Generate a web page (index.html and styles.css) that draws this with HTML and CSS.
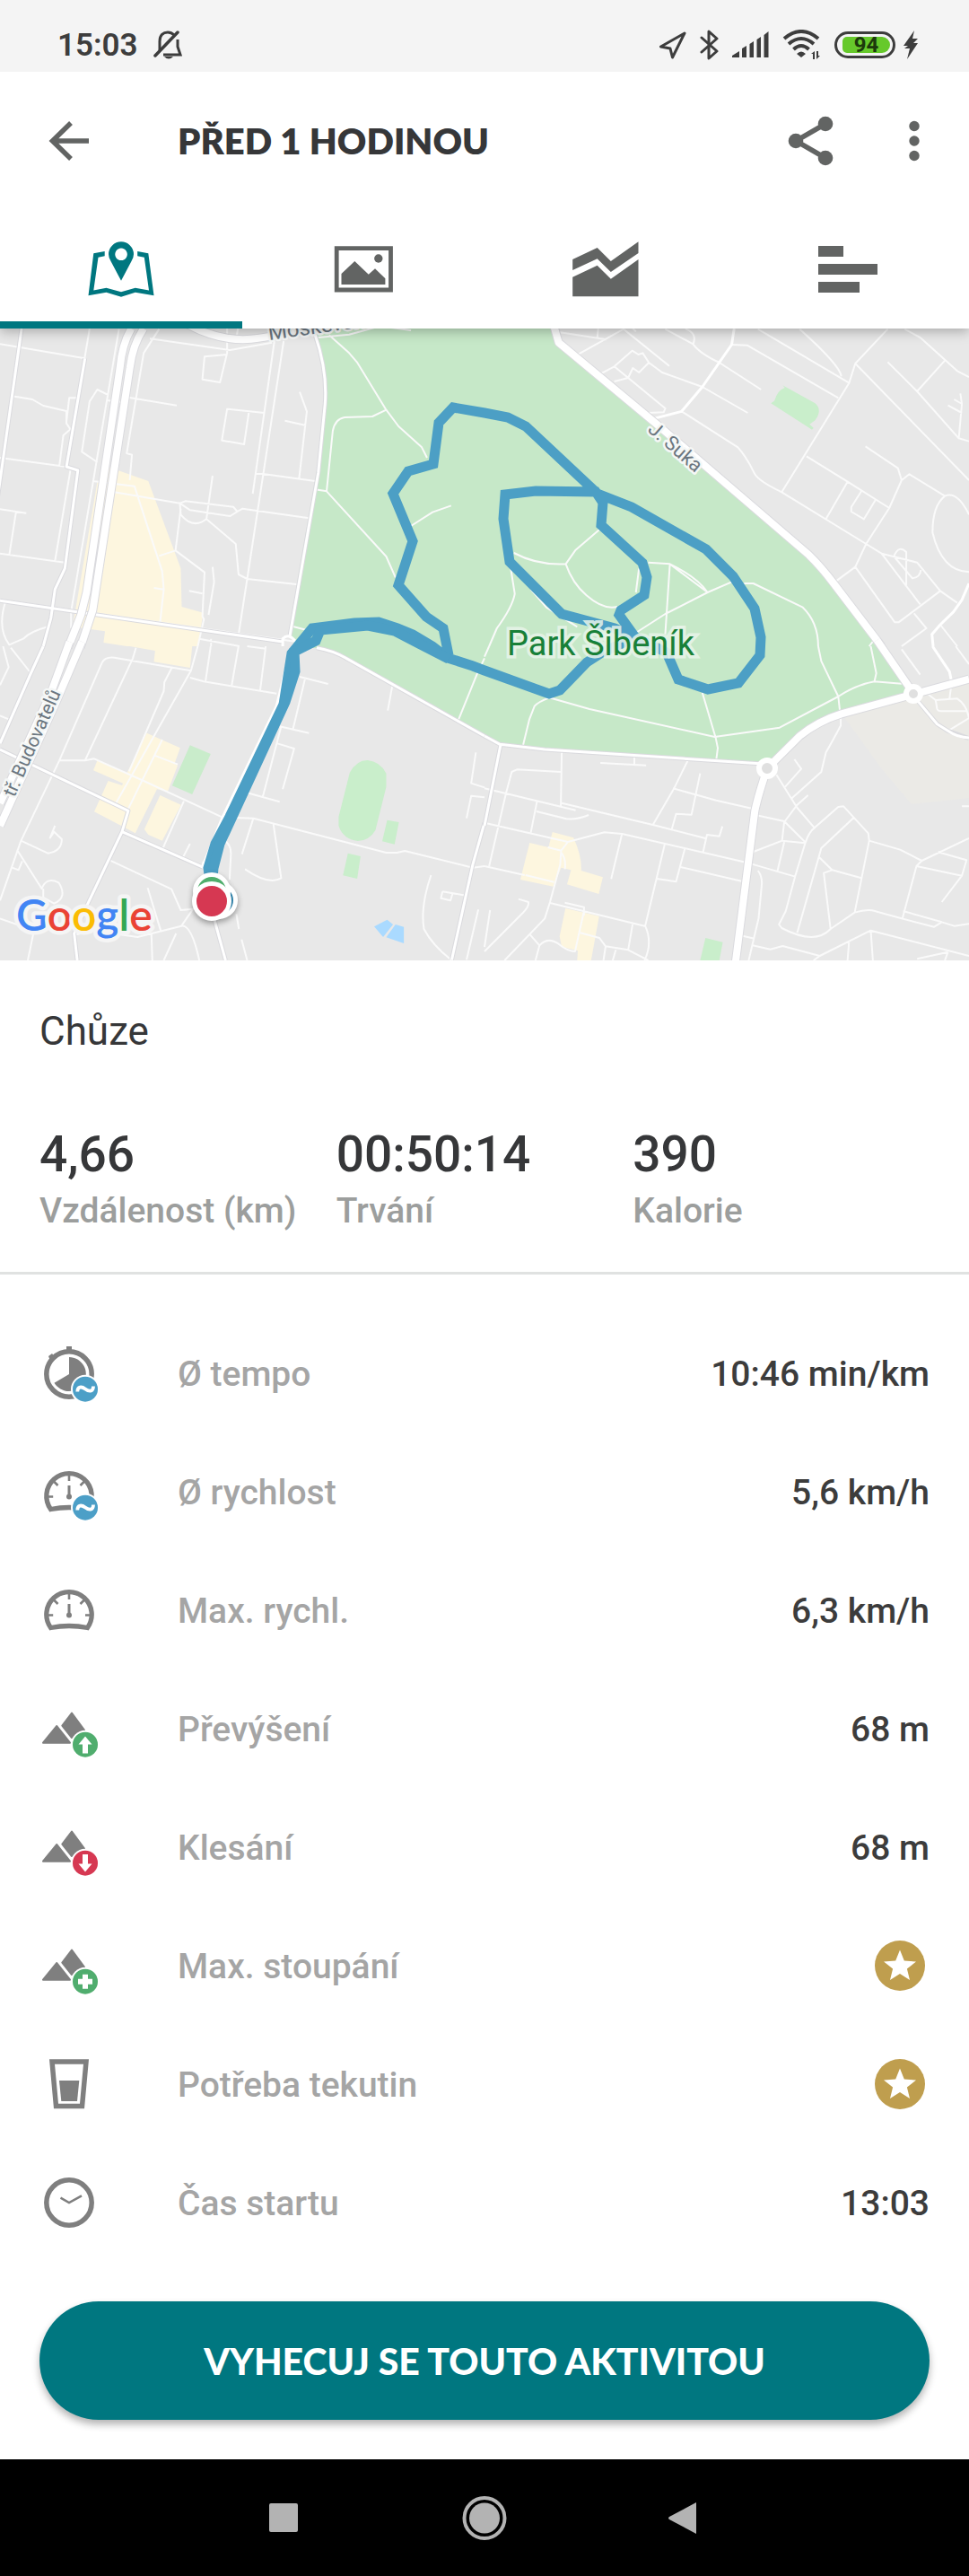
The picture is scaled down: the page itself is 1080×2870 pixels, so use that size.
FILE: index.html
```html
<!DOCTYPE html>
<html lang="cs">
<head>
<meta charset="utf-8">
<meta name="viewport" content="width=device-width, initial-scale=1">
<title>Chůze</title>
<link rel="stylesheet" href="styles.css">
</head>
<body>
<svg class="defs" width="0" height="0" aria-hidden="true">
  <defs>
    <symbol id="gauge" viewBox="0 0 66 66">
      <path d="M12.500 51.500A25.200 25.200 0 1 1 53.500 51.500Q33 47.500 12.500 51.500Z" fill="none" stroke="#7f7f7f" stroke-width="5.300"/>
      <path d="M33 14v6M10 37.500h5.200M51 37.500h5M16 20.500l4.500 4.500M50 20.500L45.500 25" stroke="#7f7f7f" stroke-width="2.600"/>
      <path d="M33 25v12" stroke="#7f7f7f" stroke-width="3"/><circle cx="33" cy="37.500" r="3" fill="#7f7f7f"/>
    </symbol>
    <symbol id="hills" viewBox="0 0 66 66">
      <path d="M4 47.700L19.300 29L34 47.700ZM36 14.500L25.300 28.700L36 42L50 33.500Z" fill="#7f7f7f" stroke="#7f7f7f" stroke-width="2" stroke-linejoin="round"/>
    </symbol>
    <symbol id="average" viewBox="0 0 66 66">
      <circle cx="51" cy="49.700" r="16" fill="#fff"/><circle cx="51" cy="49.700" r="14" fill="#4c9fc7"/>
      <path d="M42.300 52.500C42.300 46.500 47 46.500 51 49.500S60 53 60 46.500" fill="none" stroke="#fff" stroke-width="3.800"/>
    </symbol>
    <symbol id="star" viewBox="0 0 66 66">
      <circle cx="33" cy="32" r="28" fill="#bf9e4e"/>
      <path d="M33 14.500L37.800 26.600L51 27.500L40.900 35.500L44 48L33 41L22 48L25.100 35.500L15 27.500L28.200 26.600Z" fill="#fff"/>
    </symbol>
  </defs>
</svg>

<header class="top">
  <div class="status">
    <div class="status-side">
      <time class="clock">15:03</time>
      <svg width="32" height="34" viewBox="0 0 32 34" fill="none" stroke="#3d3d3d" stroke-width="3"><path d="M7 23V13C7 6 11 3 16 3Q20 3 23 6M27 11V19L30 28H11"/><path d="M2 29L27 3" stroke-width="3.500" stroke-linecap="round"/><path d="M12 30h10Q17 35 12 30Z" fill="#3d3d3d" stroke="none"/></svg>
    </div>
    <div class="status-side status-right">
      <svg width="31" height="32" viewBox="0 0 31 32"><path d="M29 3L2.500 18L13 20L15.500 30Z" fill="none" stroke="#3d3d3d" stroke-width="3" stroke-linejoin="round"/></svg>
      <svg width="21" height="36" viewBox="0 0 21 36"><path d="M2 10L19 25L10 33V3L19 11L2 26" fill="none" stroke="#3d3d3d" stroke-width="3" stroke-linejoin="round" stroke-linecap="round"/></svg>
      <svg width="41" height="30" viewBox="0 0 41 30"><path d="M0 29V27L8 22V29ZM11 29V19L16 16V29ZM19.500 29V14L24 11V29ZM27.500 29V9L32 6V29ZM35.500 29V4L40.500 0V29Z" fill="#3d3d3d"/></svg>
      <svg width="43" height="34" viewBox="0 0 43 34"><g fill="none" stroke="#3d3d3d" stroke-width="4"><path d="M2 10Q21 -6 40 10M7 16Q21 4 35 16M12.500 22Q21 14 29.500 22"/></g><path d="M16 27Q21 22 26 27L21 31ZM32 27L36 24V33H34V27ZM38 33V24H40V29H42Z" fill="#3d3d3d"/></svg>
      <div class="battery"><span class="battery-level">94</span></div>
      <svg class="bolt" width="18" height="32" viewBox="0 0 18 32"><path d="M13 0L1 17H6L2 20H8L5 32L17 14H12L17 9H11Z" fill="#3d3d3d"/></svg>
    </div>
  </div>

  <div class="toolbar">
    <button class="icon-button" aria-label="Zpět"><svg width="66" height="66" viewBox="0 0 66 66"><path d="M55 33H15M35 13L14.500 33L35 53" fill="none" stroke="#626463" stroke-width="5.500"/></svg></button>
    <h1 class="title">PŘED 1 HODINOU</h1>
    <button class="icon-button" aria-label="Sdílet"><svg width="66" height="66" viewBox="0 0 66 66"><path d="M50 14L17 33L50 52" fill="none" stroke="#626463" stroke-width="5.500"/><g fill="#626463"><circle cx="50" cy="14" r="8.300"/><circle cx="17" cy="33" r="8.300"/><circle cx="50" cy="52" r="8.300"/></g></svg></button>
    <button class="icon-button" aria-label="Další možnosti"><svg width="66" height="66" viewBox="0 0 66 66" fill="#626463"><circle cx="33" cy="16.500" r="5.700"/><circle cx="33" cy="33" r="5.700"/><circle cx="33" cy="49.500" r="5.700"/></svg></button>
  </div>

  <nav class="tabs">
    <button class="tab tab-active" aria-label="Mapa"><svg width="90" height="90" viewBox="0 0 90 90" fill="#007780"><path d="M26.700 25L14.300 27.300L8.500 74.300L28.500 70.700L45 75.700L60.800 70.700L81.500 74.300L75.300 27.300L63.200 25V30.300L70.800 31.700L76 68.500L60.800 65.700L45 70.300L28.500 65.700L14.300 68.500L19.500 31.700L26.700 30.300Z"/><path fill-rule="evenodd" d="M45 57.700L33.500 36Q31 32 31 28.300A14 14 0 0 1 59 28.300Q59 32 56.500 36ZM45 21.500a6.800 6.800 0 1 0 .1 0Z"/></svg></button>
    <button class="tab" aria-label="Fotky"><svg width="90" height="90" viewBox="0 0 90 90" fill="#626463"><path d="M15.200 21.700H75.500V68H15.200Z" fill="none" stroke="#626463" stroke-width="4.800"/><path d="M20.500 50L35.300 36L50.800 50.700L58 44.300L69.400 55.300V62H20.500Z"/><circle cx="61.800" cy="33" r="4.700"/></svg></button>
    <button class="tab" aria-label="Grafy"><svg width="90" height="90" viewBox="0 0 90 90" fill="#626463"><path d="M8.200 34L35.700 21L50.800 36L81.500 14.300V27L50.800 48L35.700 33.300L8.200 46ZM8.200 53.700L35.700 40.700L50.800 55.700L81.500 34V75.300H8.200Z"/></svg></button>
    <button class="tab" aria-label="Mezičasy"><svg width="90" height="90" viewBox="0 0 90 90" fill="#626463"><path d="M12 19h28v12H12ZM12 39h66v12H12ZM12 59h46v12H12Z"/></svg></button>
  </nav>
</header>

<main>
  <svg class="map" viewBox="0 366 1080 704" preserveAspectRatio="xMidYMid slice" role="img" aria-label="Mapa trasy">
    <rect y="366" width="1080" height="704" fill="#e8e8e8"/>
    <path d="M351 366V373L362 423V453L356 507L331 650L324 708L330 722H355L377 729L437 763L540 820L557 830L612 836L846 851L866 845L891 820L912 806L938 795L1018 773L984 723L922 638L898 615L624 383L617 366Z" fill="#c6e8c8"/>
    <path d="M938 795L1018 775L1080 760V889L1016 896L983 857Z" fill="#ebeae6"/>

    <g class="tile" transform="matrix(.34438 0 0 .33333 0 360)">
      <path class="built" d="M355 482L480 528L585 820L588 948L658 968L640 1080L410 1080L335 1068L340 1030L235 1015L315 530Z"/>
      <g class="minor">
        <path d="M0 70L275 118M290 18L215 480M35 243L105 255L140 276L215 294V335L228 355L205 375L192 478M248 250H224L215 330M0 450L215 480M228 490L178 795M0 622L85 635M52 630L30 775M0 770L210 800M0 925L960 1065M385 20L230 965V1020M515 20L465 100L410 435L427 440L420 525M350 240L315 222L290 262L265 430L315 465M345 258L395 264M485 52L745 90L880 65M735 18V100L712 198L655 188L662 112L735 105M770 18L765 50M888 60L818 570M918 60L800 855L773 1035M415 248L572 275M855 300L735 287L718 392L790 405L806 294M970 230L993 295L968 520M922 326L990 342M825 500L1020 528M300 528L435 545L525 830L530 890L518 1000M370 565L582 602L600 595L755 614L768 630L745 645L615 625L582 602L585 640Q625 690 668 655L763 738L772 840L800 855L960 873M688 510L668 655M768 630L785 620L1000 652M585 620L568 760L515 778M568 760L662 833L655 980L660 990L640 1080M688 815L693 865L675 975M612 895L655 904M498 885L530 890M18 930Q-10 1020 30 1075L75 1055Q100 1030 155 1015M645 1055L775 1080M683 1055V1080"/>
        <path d="M1065 40L1130 100L1155 130L1250 290L1290 345L1365 415L1382 450M1250 290L1205 312L1115 315Q1085 320 1077 360L1057 562L1020 556M1057 562L1250 780L1280 850M1330 678L1400 632L1460 610M940 1012L990 1025M1030 48L1130 38L1230 10L1330 24"/>
      </g>
      <g class="street-edge"><path d="M70 18L-10 600M275 118L215 480L252 492L210 820L178 890L165 985L140 1080M1020 40Q1060 160 1052 270L1030 500L938 1045M0 928L915 1065"/></g>
      <g class="street"><path d="M70 18L-10 600M275 118L215 480L252 492L210 820L178 890L165 985L140 1080M1020 40Q1060 160 1052 270L1030 500L938 1045M0 928L915 1065M915 1080V1055Q935 1035 955 1062"/></g>
      <g class="avenue-edge"><path d="M425 18Q395 70 388 150L280 900L262 975L220 1085M465 18Q430 70 420 150L300 960L260 1085M600 0Q720 70 840 50L1030 20"/></g>
      <g class="avenue"><path d="M425 18Q395 70 388 150L280 900L262 975L220 1085M465 18Q430 70 420 150L300 960L260 1085M600 0Q720 70 840 50L1030 20"/></g>
    </g>

    <g class="tile" transform="matrix(.34438 0 0 .33333 540 360)">
      <path class="grass" d="M965 208L1070 268Q1095 290 1070 325L1052 338L1065 350L1060 356L927 268L938 260Q950 222 972 216Z"/>
      <g class="minor">
        <path d="M240 30L395 55M368 18L365 50M305 103L450 20L598 143M478 15L490 28M420 195L465 183L420 145L375 170M420 145L478 92L498 105L512 100L532 132L500 165L480 150L465 183L585 285L580 298L530 300M585 20L675 70Q690 35 650 18M675 70Q695 100 760 132L895 222M532 132L575 165L705 213L852 300M800 72L850 74L1145 250M885 20L1180 200M1020 20Q1150 140 1155 178M1305 20L1200 135L1180 200L962 565M1200 135L1568 525M1360 20L1410 48L1530 160L1568 180M1490 125L1400 228M1305 130L1400 228L1535 385L1568 395M1540 235L1545 270L1535 385M1500 275L1545 300M1520 255L1545 270M638 295L820 415Q850 450 875 505Q890 530 962 565L1235 738L1285 770L1410 940M1042 445L1175 530L1310 618M1175 530L1105 655M1222 558L1187 615V630L1228 655L1265 592M1233 412L1338 485L1350 525L1310 618L1235 738L1200 815L1138 862M1350 525L1375 505L1490 578Q1450 610 1450 700Q1480 830 1568 832M1490 578Q1530 560 1568 640M1285 770L1400 800L1475 895L1340 1000H1328L1200 815M1365 875V765Q1340 740 1325 780L1385 853Q1410 850 1412 825M1475 895L1530 935M1350 1080L1430 1020L1390 970M1475 1008L1530 1080"/>
        <path d="M95 768Q170 810 263 805L295 758L372 690M263 805Q285 870 330 910Q385 960 430 948M85 820L98 905Q90 950 40 1020L15 1080M150 890L200 950L300 1015M530 800L600 805L722 900L800 865M600 805L585 1040M500 820L490 900M722 900L585 972L490 1035M600 805Q690 850 722 900M840 870H870L1030 950Q1080 1000 1080 1080M1245 1080L1260 1060"/>
      </g>
      <g class="street"><path d="M808 18L800 72L705 213L638 295L545 320M1568 870L1545 925L1518 965L1475 1008L1448 1040L1452 1080"/></g>
      <g class="avenue-edge"><path d="M222 0L240 65L560 340L1050 775Q1090 815 1130 870L1285 1080"/></g>
      <g class="avenue"><path d="M222 0L240 65L560 340L1050 775Q1090 815 1130 870L1285 1080"/></g>
    </g>

    <g class="tile" transform="matrix(.34438 0 0 .33333 0 720)">
      <path class="built" d="M420 0H622L615 72L498 52L502 15ZM475 290L583 340L565 392L575 398L543 485L508 478L438 625L305 553L350 450L395 465L398 458L302 415L315 382L410 425ZM518 498L586 530L525 650L480 630L467 612Z"/>
      <path class="grass" d="M1132 422Q1155 380 1190 381Q1230 385 1250 425V470L1215 615Q1195 650 1158 651Q1110 645 1096 600V570ZM1253 581L1291 588L1277 662L1237 652ZM1126 692L1167 702L1156 777L1110 766Z"/>
      <path fill="#c9eccb" d="M615 331L682 360L622 495L557 466Z"/>
      <path fill="#aadaff" d="M1253 914L1272 930L1240 972L1211 937ZM1280 930L1307 938V993L1250 973Z"/>
      <g class="minor">
        <path d="M0 130L28 70L10 0M35 5L100 90M192 382H275L430 40L440 5M275 382L305 376L465 450L720 572L820 575L1250 690H1285L1310 684L1530 740L1568 735M330 55Q340 35 370 38L618 82L640 0M330 55L192 382L68 650L0 850M418 418L530 150L532 120L556 72M618 82L375 525M525 312L412 550M615 105L660 118L895 158M682 0L665 118M772 0L750 130M860 0L842 148M800 0L860 8M500 365L575 395M595 518L525 680M615 660L590 710M68 650L155 692Q200 685 200 645L175 620L162 640L178 600M55 680L135 810Q150 770 190 790Q220 840 175 860L140 840V810M35 738L60 748L72 718M355 715L555 812L585 882L625 878L587 935L445 972L300 950L240 965M478 808L520 950M490 960L493 1050M587 935Q620 930 645 1050M0 910L110 950L90 1050M720 645Q750 660 747 700L743 780M765 895L773 945M782 980L800 1050M820 575L783 695M885 595L910 775Q870 800 793 745M988 105L948 278M970 102L1062 126M905 268L1000 290M910 268L850 505M800 490L905 520M898 325L952 342L915 478M1270 130L1255 215M1540 355L1525 458L1568 472M1568 505L1525 500L1510 575M1395 765Q1360 870 1372 945Q1400 1000 1460 1048M1432 820L1508 833M1432 820L1427 842L1458 850L1465 825M1548 880L1510 1048M0 232L30 245M530 1050L570 960"/>
        <path d="M1482 250L1545 90L1568 40"/>
      </g>
      <g class="street-edge"><path d="M0 345L415 550L395 620L655 738M395 620L275 880L240 960L250 1050M140 0L100 90L0 325M690 900L730 1050M1025 5Q1080 15 1120 40L1568 300M1568 590L1530 730L1462 1048"/></g>
      <g class="street"><path d="M0 345L415 550L395 620L655 738L660 720M395 620L275 880L240 960L250 1050M140 0L100 90L0 325M690 900L730 1050M1025 5Q1080 15 1120 40L1568 300M1568 590L1530 730L1462 1048M940 10L895 200L720 572L655 738"/></g>
      <g class="avenue-edge"><path d="M225 -15L165 155L0 525M265 -15L180 190L0 600"/></g>
      <g class="avenue"><path d="M225 -15L165 155L0 525M265 -15L180 190L0 600"/></g>
    </g>

    <g class="tile" transform="matrix(.34438 0 0 .33333 540 720)">
      <path class="built" d="M220 621L288 640Q315 700 313 750L383 772L370 828L267 796L280 748L248 740L222 803L116 780L146 657L207 672ZM262 876L371 902L345 1050H300L302 1018L250 1005L243 970Z"/>
      <path class="grass" d="M715 975L771 989L760 1050H698Z"/>
      <g class="minor">
        <path d="M0 475L295 548M170 518L150 622M168 552L265 577Q300 580 337 564M250 350L247 535M247 420L105 412L88 420L70 490L15 735M250 524L545 597L715 642M375 390L523 398M485 365V395M658 382L612 478L545 597M610 475L750 515L868 543M698 425L670 563L620 560L606 612M770 602L760 635L720 630L707 690M0 590L270 654L388 622L445 627L845 722L1005 770M270 654L248 683L205 672M248 683L245 730L212 855L195 910L65 1050M248 690Q265 710 260 745M133 765L225 788M0 735L130 765M445 627L410 778M583 663L520 935Q545 990 518 1050M558 777L620 787L648 678M635 738L832 785M212 858L518 935M322 885L293 1020Q270 1020 240 995Q205 970 178 1000L165 1050M148 965L178 1000M310 958L372 975L392 1003L385 1050M392 1003L465 1015L530 1050M480 925L465 1015M425 1015L415 1050M260 857L322 872V900M110 845L142 855Q145 870 125 890L0 1020M18 882L0 1005M945 430L1012 540L1068 607M1003 378L1025 410L973 470M1153 235V265Q1125 320 1105 355L1090 420L995 508M1047 498L1012 530L970 588L963 650L1038 658M880 565L970 585L1038 655M863 690L963 650M970 655L948 752M1038 658L1005 770L975 885L953 930L962 942Q1070 1000 1120 945L1198 890Q1230 880 1255 883L1350 910L1455 938L1480 922L1520 935L1568 928M1038 658Q1050 620 1068 607L1145 537L1162 535L1242 625L1245 650L1198 890M1195 573L1090 675L1012 958M1083 705L1125 748L1220 775M1125 748L1098 758L1120 945M1245 650L1345 680L1415 717L1568 642M1415 717L1398 735L1545 767M1398 735L1352 912M1355 885L1480 922M1468 688L1560 715L1545 767L1480 855M885 750Q900 770 897 800L887 910L855 1050M830 967L873 977M868 1000L925 1013L965 1002L1085 1035L1250 950L1568 1035M1085 1035L1065 1050M1180 985L1175 1050M1250 950L1257 1050M1500 1022L1490 1050M1500 1022L1400 1045M1545 535H1568M1435 160L1460 180L1530 175Q1560 195 1568 240L1500 283M1460 180L1465 210Q1468 218 1480 217H1560M1350 10L1410 95M1505 175L1512 120M1525 0L1568 60"/>
        <path d="M125 330L145 245L162 200Q175 185 210 172L340 210L745 303L955 272L1145 168Q1200 130 1262 118L1350 125M705 155L748 305L755 340L750 380M1080 0L1090 50L1145 168L1150 215M1250 0L1268 90L1262 118M15 0L0 35"/>
      </g>
      <g class="street-edge"><path d="M0 300L50 328L195 345L890 392M52 330L0 600M1400 180L1465 260L1500 283L1568 308"/></g>
      <g class="street"><path d="M0 300L50 328L195 345L890 392M52 330L0 600M1400 180L1465 260L1500 283Q1530 305 1568 306M1450 0L1505 85L1512 120"/></g>
      <g class="avenue-edge"><path d="M1270 -20L1390 160L1568 110M915 408L1020 300Q1080 250 1155 226L1390 160M915 408Q885 500 875 550L812 1060"/></g>
      <g class="avenue"><path d="M1270 -20L1390 160L1568 110M915 408L1020 300Q1080 250 1155 226L1390 160M915 408Q885 500 875 550L812 1060"/></g>
    </g>
    <g fill="#e0e0e0" stroke="#fff" stroke-width="6"><circle cx="855" cy="856" r="9"/><circle cx="1018" cy="773" r="8"/></g>

    <g class="route">
      <path d="M236 997L232 967L240 940L256 910L316 785L325 728L348 700L395 694L422 693L443 700L460 707L482 720L499 733L527 742L540 747L612 773L624 769L654 738L671 727L708 710L690 685L692 680L718 663L721 643L716 627L670 585L672 560L664 548L597 547L563 551L561 578L568 626L626 684L685 700L712 712L743 727L756 757L789 768L823 761L847 730L848 710L841 678L817 642L787 612L704 565L666 550L586 475L566 465L540 460L505 454L489 471L483 517L455 525L438 550L460 603L444 652L475 687L494 700L500 730"/>
      <path d="M236 990L238 967L245 940L318 782L329 748L328 726L352 714L357 702L410 697L440 703L465 716L500 734"/>
    </g>

    <g class="label">
      <text transform="translate(300 379) rotate(-8)" font-size="24">Moskevská</text>
      <text transform="translate(721 480) rotate(41)" font-size="22">J. Suka</text>
      <text transform="translate(16 889) rotate(-66)" font-size="21">tř. Budovatelů</text>
    </g>
    <text class="park" x="565" y="730">Park Šibeník</text>

    <g class="pins">
      <circle cx="244" cy="1003" r="18.500" fill="#2f7fa6"/>
      <circle cx="236" cy="993" r="18.500" fill="#4fae6c"/>
      <circle cx="236" cy="1004" r="19.500" fill="#d63852"/>
    </g>
    <text class="google" x="18" y="1037"><tspan fill="#4285f4">G</tspan><tspan fill="#ea4335">o</tspan><tspan fill="#fbbc04">o</tspan><tspan fill="#4285f4">g</tspan><tspan fill="#34a853">l</tspan><tspan fill="#ea4335">e</tspan></text>
  </svg>

  <section class="summary">
    <h2 class="sport">Chůze</h2>
    <dl class="totals">
      <div class="total"><dd>4,66</dd><dt>Vzdálenost (km)</dt></div>
      <div class="total"><dd>00:50:14</dd><dt>Trvání</dt></div>
      <div class="total"><dd>390</dd><dt>Kalorie</dt></div>
    </dl>
  </section>

  <dl class="details">
    <div class="row"><svg class="row-icon" viewBox="0 0 66 66"><circle cx="33" cy="33" r="25.200" fill="none" stroke="#7f7f7f" stroke-width="5.500"/><path d="M30 2h6v6h-6ZM10 13l4-3 3 4-5 4Z M33 14A19 19 0 1 1 16.500 42.700L33 33Z" fill="#7f7f7f"/><use href="#average"/></svg><dt>Ø tempo</dt><dd>10:46 min/km</dd></div>
    <div class="row"><svg class="row-icon" viewBox="0 0 66 66"><use href="#gauge"/><use href="#average"/></svg><dt>Ø rychlost</dt><dd>5,6 km/h</dd></div>
    <div class="row"><svg class="row-icon" viewBox="0 0 66 66"><use href="#gauge"/></svg><dt>Max. rychl.</dt><dd>6,3 km/h</dd></div>
    <div class="row"><svg class="row-icon" viewBox="0 0 66 66"><use href="#hills"/><circle cx="51" cy="49.700" r="16" fill="#fff"/><circle cx="51" cy="49.700" r="14" fill="#50ad6e"/><path d="M51 40.500L58.500 49.500H54V59.500H48V49.500H43.500Z" fill="#fff"/></svg><dt>Převýšení</dt><dd>68 m</dd></div>
    <div class="row"><svg class="row-icon" viewBox="0 0 66 66"><use href="#hills"/><circle cx="51" cy="49.700" r="16" fill="#fff"/><circle cx="51" cy="49.700" r="14" fill="#d63852"/><path d="M51 59.500L58.500 50.500H54V40H48V50.500H43.500Z" fill="#fff"/></svg><dt>Klesání</dt><dd>68 m</dd></div>
    <div class="row"><svg class="row-icon" viewBox="0 0 66 66"><use href="#hills"/><circle cx="51" cy="49.700" r="16" fill="#fff"/><circle cx="51" cy="49.700" r="14" fill="#50ad6e"/><path d="M48 41.700h6v5h5v6h-5v5h-6v-5h-5v-6h5Z" fill="#fff"/></svg><dt>Max. stoupání</dt><dd><svg class="row-icon" role="img" aria-label="Premium"><use href="#star"/></svg></dd></div>
    <div class="row"><svg class="row-icon" viewBox="0 0 66 66"><path d="M14 7H52L47.500 56.500H18.500Z" fill="none" stroke="#7f7f7f" stroke-width="5.500"/><path d="M22 28H44.300L42 51H24.300Z" fill="#7f7f7f"/></svg><dt>Potřeba tekutin</dt><dd><svg class="row-icon" role="img" aria-label="Premium"><use href="#star"/></svg></dd></div>
    <div class="row"><svg class="row-icon" viewBox="0 0 66 66" fill="none" stroke="#7f7f7f"><circle cx="33" cy="32" r="25.200" stroke-width="5.500"/><path d="M23.500 26.700L33 32L47 24.300" stroke-width="2.500"/></svg><dt>Čas startu</dt><dd>13:03</dd></div>
  </dl>

  <div class="action"><button class="primary">VYHECUJ SE TOUTO AKTIVITOU</button></div>
</main>

<footer class="system-nav">
  <button class="system-button" aria-label="Poslední aplikace"><svg width="72" height="72" viewBox="0 0 72 72"><rect x="18" y="20" width="32" height="32" rx="2" fill="#b3b3b3"/></svg></button>
  <button class="system-button" aria-label="Domů"><svg width="72" height="72" viewBox="0 0 72 72"><circle cx="36" cy="36.500" r="22.500" fill="none" stroke="#b3b3b3" stroke-width="4"/><circle cx="36" cy="36.500" r="17" fill="#b3b3b3"/></svg></button>
  <button class="system-button" aria-label="Zpět"><svg width="72" height="72" viewBox="0 0 72 72"><path d="M50 19V54L20 38Q18 36.500 20 35Z" fill="#b3b3b3"/></svg></button>
</footer>
</body>
</html>
```
FILE: styles.css
```css
* { box-sizing: border-box; }

body {
  margin: 0;
  background: #fff;
  color: #363739;
  font-family: Roboto, "Liberation Sans", sans-serif;
}

h1, h2, dl, dt, dd { margin: 0; }

button {
  margin: 0;
  padding: 0;
  border: 0;
  background: none;
  font: inherit;
}

svg { display: block; flex-shrink: 0; }

.defs { position: absolute; }

.top {
  position: relative;
  z-index: 1;
  background: #fff;
  box-shadow: 0 4px 12px rgba(0, 0, 0, .25);
}

.status {
  display: flex;
  justify-content: space-between;
  height: 80px;
  padding: 20px 56px 0 64px;
  background: #f4f4f4;
}

.status-side {
  display: flex;
  align-items: center;
  gap: 17px;
  height: 60px;
}

.status-right { gap: 15px; }

.clock {
  color: #3d3d3d;
  font-size: 35px;
  font-weight: 600;
}

.battery {
  width: 68px;
  height: 30px;
  padding: 3px;
  border: 3px solid #3d3d3d;
  border-radius: 15px;
}

.battery-level {
  display: block;
  height: 18px;
  margin-left: 3px;
  border-radius: 5px 9px 9px 5px;
  background: #66c92b;
  color: #1c3a0c;
  font-size: 24px;
  font-weight: 700;
  line-height: 19px;
  text-align: center;
}

.bolt { margin-left: -7px; }

.toolbar {
  display: flex;
  align-items: center;
  gap: 50px;
  height: 154px;
  padding: 0 28px 0 44px;
}

.icon-button { width: 66px; height: 66px; }

.title {
  flex: 1;
  padding-left: 38px;
  font-family: Lato, sans-serif;
  font-size: 40px;
  font-weight: 800;
}

.tabs {
  display: grid;
  grid-template-columns: repeat(4, 1fr);
}

.tab {
  display: grid;
  place-items: center;
  height: 132px;
  border-top: 8px solid transparent;
  border-bottom: 8px solid transparent;
}

.tab-active { border-bottom-color: #007780; }

.map { width: 100%; height: 704px; }

.tile path { vector-effect: non-scaling-stroke; }
.built { fill: #fdf6df; }
.grass { fill: #c9eecb; }

.minor, .street, .street-edge, .avenue, .avenue-edge {
  fill: none;
  stroke: #fff;
  stroke-linejoin: round;
}

.minor { stroke: #fafafa; stroke-width: 2px; }
.street { stroke-width: 3px; }
.street-edge { stroke: #dadade; stroke-width: 5px; }
.avenue { stroke-width: 8px; }
.avenue-edge { stroke: #dadade; stroke-width: 10px; }

.route {
  fill: none;
  stroke: #4c9fc5;
  stroke-width: 11px;
}

.label {
  fill: #6b7680;
  stroke: #f5f7f6;
  stroke-width: 5px;
  stroke-linejoin: round;
  paint-order: stroke;
}

.park {
  fill: #188038;
  stroke: #e8f4ea;
  stroke-opacity: .85;
  stroke-width: 7px;
  paint-order: stroke;
  font-size: 38px;
}

.pins {
  stroke: #fff;
  stroke-width: 5px;
  filter: drop-shadow(0 3px 3px rgba(0, 0, 0, .35));
}

.google {
  stroke: #f5f5f5;
  stroke-width: 9px;
  stroke-linejoin: round;
  paint-order: stroke;
  font-family: Lato, sans-serif;
  font-size: 48px;
  font-weight: 600;
}

.summary {
  padding: 49px 44px 40px;
  border-bottom: 3px solid #e0e2e1;
}

.sport {
  font-size: 44px;
  font-weight: 400;
  line-height: 60px;
}

.totals {
  display: grid;
  grid-template-columns: repeat(3, 1fr);
  margin-top: 72px;
}

.total { display: flex; flex-direction: column; white-space: nowrap; }

.total dd {
  font-size: 55px;
  font-weight: 500;
  line-height: 70px;
}

.total dt {
  color: #9c9e9d;
  font-size: 39px;
  font-weight: 500;
  line-height: 56px;
}

.details { padding: 45px 44px 0; }

.row {
  display: flex;
  align-items: center;
  height: 132px;
}

.row-icon { width: 66px; height: 66px; }

.row dt {
  flex: 1;
  padding-left: 88px;
  color: #a5a5a5;
  font-size: 39px;
  font-weight: 500;
}

.row dd {
  color: #3c3c3c;
  font-size: 39px;
  font-weight: 500;
}

.action { padding: 43px 44px 44px; }

.primary {
  width: 100%;
  height: 132px;
  border-radius: 66px;
  background: #007780;
  box-shadow: 0 5px 8px rgba(0, 0, 0, .3);
  color: #fff;
  font-family: Lato, sans-serif;
  font-size: 41px;
  font-weight: 900;
}

.system-nav {
  display: flex;
  align-items: center;
  justify-content: center;
  gap: 150px;
  height: 130px;
  background: #000;
}

.system-button { width: 72px; height: 72px; }
```
